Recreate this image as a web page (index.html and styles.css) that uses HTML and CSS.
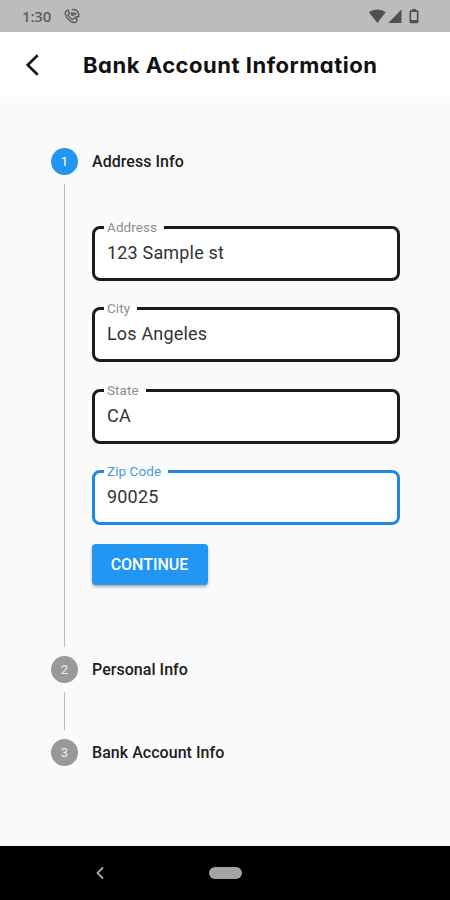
FILE: index.html
```html
<!DOCTYPE html>
<html lang="en">
<head>
<meta charset="utf-8">
<title>Bank Account Information</title>
<link rel="stylesheet" href="styles.css">
</head>
<body>
<div class="status">
  <span class="time">1:30</span>
  <svg class="call" width="16" height="16" viewBox="0 0 16 16" fill="none" stroke="#5c5c5c" stroke-width="1.4" stroke-linejoin="round"><path d="M2 3.200 4.200 2.200 5.400 5.300 4 7C4.900 9 6.300 10.400 8.400 11.500l1.800-1.400 3 1.300-.9 2.500c-.7.9-2.300.8-4 .1C4.600 12.400 2.300 9.600 1.500 6.400 1.200 5.200 1.300 4 2 3.200Z"/><path d="M7.600 4V7h3M7.900 6.600C8.500 4.500 11.500 4.300 12 7M8 1.700C11.500.7 14.500 3 14.500 6.500M14.800 5.800v3h-3M14.400 8.500C13.200 9.800 11.500 9.600 10.600 8.600"/></svg>
  <svg class="signals" width="51" height="16" viewBox="0 0 51 16" fill="#505050"><path d="M0 4.300C4.700.7 12 .7 16.700 4.300L8.400 15Z"/><path d="M32.500 1.500V15H19.300Z"/><path fill-rule="evenodd" d="M43 2.300V1h4v1.300h1.300q1.200 0 1.200 1.200V14q0 1.200-1.200 1.200h-6.600q-1.200 0-1.200-1.200V3.500q0-1.200 1.200-1.200ZM42.200 4v8h5.600V4Z"/></svg>
</div>
<header class="bar">
  <svg class="back" width="16" height="24" viewBox="0 0 16 24" fill="none" stroke="#111" stroke-width="2.600"><path d="M13.700 2.200 3.700 12l10 9.800"/></svg>
  <h1>Bank Account Information</h1>
</header>
<main>
  <section class="step first">
    <div class="rail"><span class="dot active">1</span><i class="line"></i></div>
    <div class="content">
      <h2>Address Info</h2>
      <form>
        <fieldset><legend class="w-address">Address</legend><div class="value">123 Sample st</div></fieldset>
        <fieldset><legend class="w-city">City</legend><div class="value">Los Angeles</div></fieldset>
        <fieldset><legend class="w-state">State</legend><div class="value">CA</div></fieldset>
        <fieldset class="focused"><legend class="w-zip">Zip Code</legend><div class="value">90025</div></fieldset>
      </form>
      <button type="button">CONTINUE</button>
    </div>
  </section>
  <section class="step second">
    <div class="rail"><span class="dot">2</span><i class="line"></i></div>
    <div class="content"><h2>Personal Info</h2></div>
  </section>
  <section class="step">
    <div class="rail"><span class="dot">3</span></div>
    <div class="content"><h2>Bank Account Info</h2></div>
  </section>
</main>
<nav>
  <svg width="10" height="14" viewBox="0 0 10 14" fill="none" stroke="#aaa" stroke-width="1.800"><path d="M8 1.500 2.500 7l5.500 5.500"/></svg>
  <span class="pill"></span>
</nav>
</body>
</html>
```
FILE: styles.css
```css
* { box-sizing: border-box; }
body {
  margin: 0;
  height: 900px;
  display: flex;
  flex-direction: column;
  overflow: hidden;
  background: #fafafa;
  font-family: Roboto, sans-serif;
  color: #1c1c1c;
}
.status {
  height: 32px;
  flex: none;
  display: flex;
  align-items: center;
  padding: 0 30px 0 22px;
  background: #bcbcbc;
}
.time {
  width: 42px;
  font: 600 15px/20px "Open Sans", sans-serif;
  letter-spacing: -.2px;
  color: #606060;
}
.signals { margin-left: auto; }
.bar {
  height: 65px;
  flex: none;
  display: flex;
  align-items: center;
  padding-left: 24px;
  background: #fff;
}
.bar h1 {
  margin: 0 0 0 43px;
  font: 700 22px/30px Inter, sans-serif;
  font-feature-settings: "cv11";
  letter-spacing: .52px;
  color: #111;
  white-space: nowrap;
}
main {
  flex: 1;
  padding: 51px 50px 0 51px;
}
.step { display: flex; gap: 14px; }
.first { height: 508px; }
.second { height: 83px; }
.rail {
  width: 27px;
  display: flex;
  flex-direction: column;
  align-items: center;
}
.dot {
  width: 27px;
  height: 27px;
  flex: none;
  border-radius: 50%;
  background: #999;
  color: #eee;
  font-size: 13px;
  line-height: 27px;
  text-align: center;
}
.dot.active { background: #2196f3; color: #fff; }
.line {
  width: 1px;
  flex: 1;
  margin: 9px 0;
  background: #bdbdbd;
}
.content { flex: 1; }
h2 {
  margin: 0;
  font-size: 16px;
  line-height: 27px;
  font-weight: 500;
  letter-spacing: .04px;
}
form {
  display: grid;
  gap: 21.400px;
  margin-top: 46px;
}
fieldset {
  height: 60px;
  min-width: 0;
  margin: 0;
  padding: 0 12px;
  border: 3px solid #1c1c1c;
  border-radius: 8px;
  background: #fff;
}
legend {
  margin-left: -3px;
  padding: 0 0 0 3px;
  font-size: 13.500px;
  line-height: 13px;
  letter-spacing: .08px;
  color: #8c8c8c;
  white-space: nowrap;
}
.w-address { width: 60px; }
.w-city { width: 33px; }
.w-state { width: 42px; }
.w-zip { width: 64px; }
.value {
  margin-top: 7px;
  font-size: 18px;
  line-height: 24px;
  letter-spacing: .18px;
  color: #333;
}
.focused { border-color: #1e88e5; }
.focused legend { color: #4499dc; }
button {
  display: block;
  width: 116px;
  height: 41px;
  margin-top: 19px;
  padding: 0 1px 0 0;
  border: 0;
  border-radius: 4px;
  background: #2196f3;
  box-shadow: 0 2px 3px rgba(0, 0, 0, .3);
  color: #fff;
  font: 500 16px/41px Roboto, sans-serif;
}
nav {
  height: 54px;
  flex: none;
  display: flex;
  align-items: center;
  padding-left: 95px;
  background: #000;
}
.pill {
  width: 33px;
  height: 12px;
  margin-left: 104px;
  border-radius: 6px;
  background: #a4a4a4;
}
```
